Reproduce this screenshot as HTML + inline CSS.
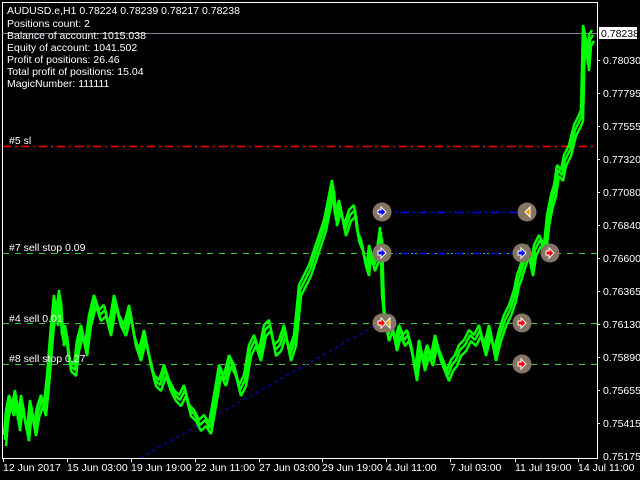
<!DOCTYPE html>
<html><head><meta charset="utf-8"><style>
body{margin:0;background:#000;width:640px;height:480px;overflow:hidden;font-family:"Liberation Sans",sans-serif;}
svg{position:absolute;left:0;top:0}
.t{font-size:10.5px;fill:#fff}
</style></head><body>
<svg width="640" height="480" viewBox="0 0 640 480">
<defs>
<polyline id="c" points="5,440 7,415 10,400 13,410 16,395 19,425 22,400 25,420 28,435 31,405 35,430 38,412 42,400 45,410 48,380 52,330 55,300 57,320 60,295 63,340 66,330 70,365 75,370 78,345 82,330 86,350 90,320 95,300 100,315 105,310 110,330 115,300 120,320 125,330 130,310 135,340 140,355 145,335 150,360 155,380 160,385 165,370 170,385 175,395 180,400 185,390 190,410 195,415 200,425 205,420 210,428 215,400 220,370 225,380 230,360 235,370 240,390 245,380 250,350 255,340 260,355 265,330 270,325 275,350 280,345 285,330 290,355 295,340 298,310 300,290 305,280 310,270 315,255 320,240 325,225 330,200 333,185 336,220 340,205 345,230 350,215 355,210 358,235 362,245 365,260 368,270 370,250 374,265 378,255 381,232 383,300 385,320 388,335 392,325 396,345 400,330 404,340 408,335 412,350 416,375 420,345 424,365 428,350 432,360 436,340 440,355 444,365 448,375 452,365 456,360 460,350 465,345 470,335 475,340 480,330 485,350 490,330 495,355 500,335 505,320 510,310 515,295 518,280 520,275 524,262 528,250 532,270 535,250 540,240 545,250 548,220 552,200 555,190 558,170 562,175 565,160 570,150 575,130 580,120 582,115 584,30 586,40 588,65 590,40 593,35"/>
</defs>
<rect x="2.5" y="2.5" width="595" height="456" fill="none" stroke="#fff"/>
<line x1="2" y1="33.5" x2="597" y2="33.5" stroke="#778899"/>
<line x1="3" y1="146.5" x2="597" y2="146.5" stroke="#f00" stroke-width="1.5" stroke-dasharray="8,4,2,4"/>
<line x1="3" y1="253.5" x2="597" y2="253.5" stroke="#3c3" stroke-dasharray="6,6"/>
<line x1="3" y1="323.5" x2="597" y2="323.5" stroke="#3c3" stroke-dasharray="6,6"/>
<line x1="3" y1="364.5" x2="597" y2="364.5" stroke="#3c3" stroke-dasharray="6,6"/>
<line x1="140" y1="458" x2="380" y2="323" stroke="#00f" stroke-dasharray="3,4"/>
<g fill="none" stroke="#0f0" stroke-width="2.5" stroke-linejoin="bevel">
<use href="#c"/>
<use href="#c" transform="translate(1,6)"/>
<use href="#c" transform="translate(-1,-5)"/>
</g>
<line x1="383" y1="212.5" x2="527" y2="212.5" stroke="#00f" stroke-width="1.5" stroke-dasharray="8,4,2,4"/>
<line x1="383" y1="253.5" x2="520" y2="253.5" stroke="#00f" stroke-width="1.5" stroke-dasharray="8,4,2,4"/>
<g fill="#857565">
<circle cx="382" cy="212" r="9.5"/><circle cx="527" cy="212" r="9.5"/>
<circle cx="382" cy="253" r="9.5"/><circle cx="522" cy="253" r="9.5"/><circle cx="550" cy="253" r="9.5"/>
<circle cx="382" cy="323" r="9.5"/><circle cx="387" cy="323" r="9.5"/><circle cx="522" cy="323" r="9.5"/><circle cx="522" cy="364" r="9.5"/>
</g>
<g stroke="#fff" stroke-width="1">
<path d="M378,210h3v-3l5,5l-5,5v-3h-3z" fill="#00f"/>
<path d="M378,251h3v-3l5,5l-5,5v-3h-3z" fill="#00f"/>
<path d="M518,251h3v-3l5,5l-5,5v-3h-3z" fill="#00f"/>
<path d="M546,251h3v-3l5,5l-5,5v-3h-3z" fill="#f00"/>
<path d="M378,321h3v-3l5,5l-5,5v-3h-3z" fill="#f00"/>
<path d="M518,321h3v-3l5,5l-5,5v-3h-3z" fill="#f00"/>
<path d="M518,362h3v-3l5,5l-5,5v-3h-3z" fill="#f00"/>
<path d="M530,207v10l-5,-5z" fill="#e90"/>
<path d="M390,318v10l-5,-5z" fill="#e90"/>
</g>
<text class="t" x="7" y="14">AUDUSD.e,H1  0.78224 0.78239 0.78217 0.78238</text>
<text class="t" x="7" y="27">Positions count: 2</text>
<text class="t" x="7" y="39">Balance of account: 1015.038</text>
<text class="t" x="7" y="51">Equity of account: 1041.502</text>
<text class="t" x="7" y="63">Profit of positions: 26.46</text>
<text class="t" x="7" y="75">Total profit of positions: 15.04</text>
<text class="t" x="7" y="87">MagicNumber: 111111</text>
<text class="t" x="9" y="144">#5 sl</text>
<text class="t" x="9" y="251">#7 sell stop 0.09</text>
<text class="t" x="9" y="322">#4 sell 0.01</text>
<text class="t" x="9" y="362">#8 sell stop 0.27</text>
<rect x="599" y="27" width="38" height="12" fill="#fff"/>
<text x="601" y="37" style="font-size:10.5px;fill:#000">0.78238</text>
<g class="t">
<text x="603" y="64">0.78030</text><text x="603" y="97">0.77795</text><text x="603" y="130">0.77555</text>
<text x="603" y="163">0.77320</text><text x="603" y="196">0.77080</text><text x="603" y="229">0.76840</text>
<text x="603" y="262">0.76600</text><text x="603" y="295">0.76365</text><text x="603" y="328">0.76130</text>
<text x="603" y="361">0.75890</text><text x="603" y="394">0.75655</text><text x="603" y="427">0.75415</text>
<text x="603" y="460">0.75175</text>
</g>
<g stroke="#fff">
<path d="M597,60.5h3M597,93.5h3M597,126.5h3M597,159.5h3M597,192.5h3M597,225.5h3M597,258.5h3M597,291.5h3M597,324.5h3M597,357.5h3M597,390.5h3M597,423.5h3"/>
<path d="M3.5,459v3M67.5,459v3M131.5,459v3M195.5,459v3M259.5,459v3M322.5,459v3M386.5,459v3M450.5,459v3M515.5,459v3M578.5,459v3"/>
</g>
<g class="t">
<text x="3" y="471">12 Jun 2017</text><text x="67" y="471">15 Jun 03:00</text><text x="131" y="471">19 Jun 19:00</text>
<text x="195" y="471">22 Jun 11:00</text><text x="259" y="471">27 Jun 03:00</text><text x="322" y="471">29 Jun 19:00</text>
<text x="386" y="471">4 Jul 11:00</text><text x="450" y="471">7 Jul 03:00</text><text x="515" y="471">11 Jul 19:00</text>
<text x="578" y="471">14 Jul 11:00</text>
</g>
</svg>
</body></html>
